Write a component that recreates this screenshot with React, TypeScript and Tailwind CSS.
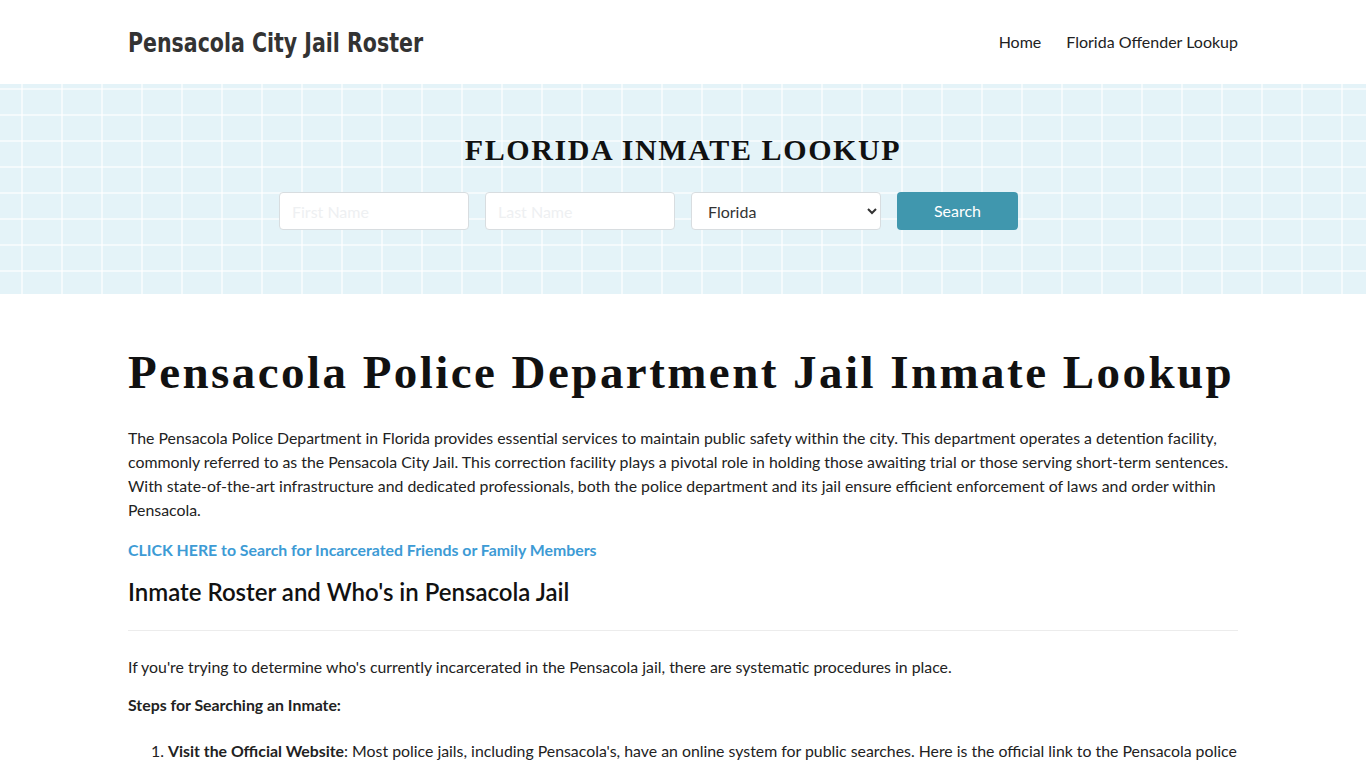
import React from "react";

export default function App() {
  const lato = { fontFamily: "Lato, 'Noto Sans', sans-serif" } as React.CSSProperties;
  return (
    <div className="min-h-screen bg-white text-[#222] text-[15.85px] leading-6" style={lato}>
      {/* Header */}
      <header className="h-[84px] bg-white">
        <div className="mx-auto flex h-full w-[1110px] items-center justify-between">
          <div
            className="mt-[2px] origin-left scale-x-[0.845] whitespace-nowrap text-[27px] font-bold text-[#333]"
            style={{ fontFamily: "'DejaVu Sans Condensed', 'DejaVu Sans', sans-serif", fontStretch: "condensed" }}
          >
            Pensacola City Jail Roster
          </div>
          <nav className="flex items-center gap-[25px] text-[16px] text-[#222]">
            <a>Home</a>
            <a>Florida Offender Lookup</a>
          </nav>
        </div>
      </header>

      {/* Hero */}
      <section className="h-[210px] bg-[#e4f3f8] bg-[linear-gradient(to_right,rgba(255,255,255,0.6)_2px,transparent_2px),linear-gradient(to_bottom,rgba(255,255,255,0.6)_2px,transparent_2px)] bg-[length:40px_26px] bg-[position:21px_4px]">
        <div className="flex flex-col items-center pt-[46px]">
          <h2
            className="text-[30px] font-bold leading-[40px] tracking-[1.6px] text-[#111]"
            style={{ fontFamily: "'Liberation Serif', serif" }}
          >
            FLORIDA INMATE LOOKUP
          </h2>
          <div className="mt-[22px] mr-[69px] flex gap-4">
            <input
              placeholder="First Name"
              className="h-[38px] w-[190px] rounded-[4px] border border-[#d8dde0] bg-white px-3 text-[16px] placeholder:text-[#eef0f2] outline-none"
            />
            <input
              placeholder="Last Name"
              className="h-[38px] w-[190px] rounded-[4px] border border-[#d8dde0] bg-white px-3 text-[16px] placeholder:text-[#eef0f2] outline-none"
            />
            <select
              defaultValue="Florida"
              className="h-[38px] w-[190px] rounded-[4px] border border-[#d8dde0] bg-white px-3 text-[16px] text-[#333] outline-none"
            >
              <option>Florida</option>
            </select>
            <button className="h-[38px] w-[121px] rounded-[4px] bg-[#4097ae] text-[16px] text-white">Search</button>
          </div>
        </div>
      </section>

      {/* Content */}
      <main className="mx-auto w-[1110px]">
        <h1
          className="mt-[50px] whitespace-nowrap text-[47px] font-bold leading-[56px] tracking-[2.45px] text-[#111]"
          style={{ fontFamily: "'Liberation Serif', serif" }}
        >
          Pensacola Police Department Jail Inmate Lookup
        </h1>
        <p className="mt-[26px]">
          The Pensacola Police Department in Florida provides essential services to maintain public safety within the city. This department operates a detention facility, commonly referred to as the Pensacola City Jail. This correction facility plays a pivotal role in holding those awaiting trial or those serving short-term sentences. With state-of-the-art infrastructure and dedicated professionals, both the police department and its jail ensure efficient enforcement of laws and order within Pensacola.
        </p>
        <p className="mt-4">
          <a className="font-bold text-[#3d9bd5]">CLICK HERE to Search for Incarcerated Friends or Family Members</a>
        </p>
        <h2 className="mt-[14px] text-[24px] font-semibold leading-[32px] text-[#111]">
          Inmate Roster and Who's in Pensacola Jail
        </h2>
        <hr className="mt-[22px] border-t border-[#ececec]" />
        <p className="mt-[24px]">
          If you're trying to determine who's currently incarcerated in the Pensacola jail, there are systematic procedures in place.
        </p>
        <p className="mt-[14px] font-bold">Steps for Searching an Inmate:</p>
        <ol className="mt-[22px] list-decimal pl-[40px]">
          <li>
            <b>Visit the Official Website</b>: Most police jails, including Pensacola's, have an online system for public searches. Here is the official link to the Pensacola police department's inmate roster where you can search by name.
          </li>
        </ol>
      </main>
    </div>
  );
}
